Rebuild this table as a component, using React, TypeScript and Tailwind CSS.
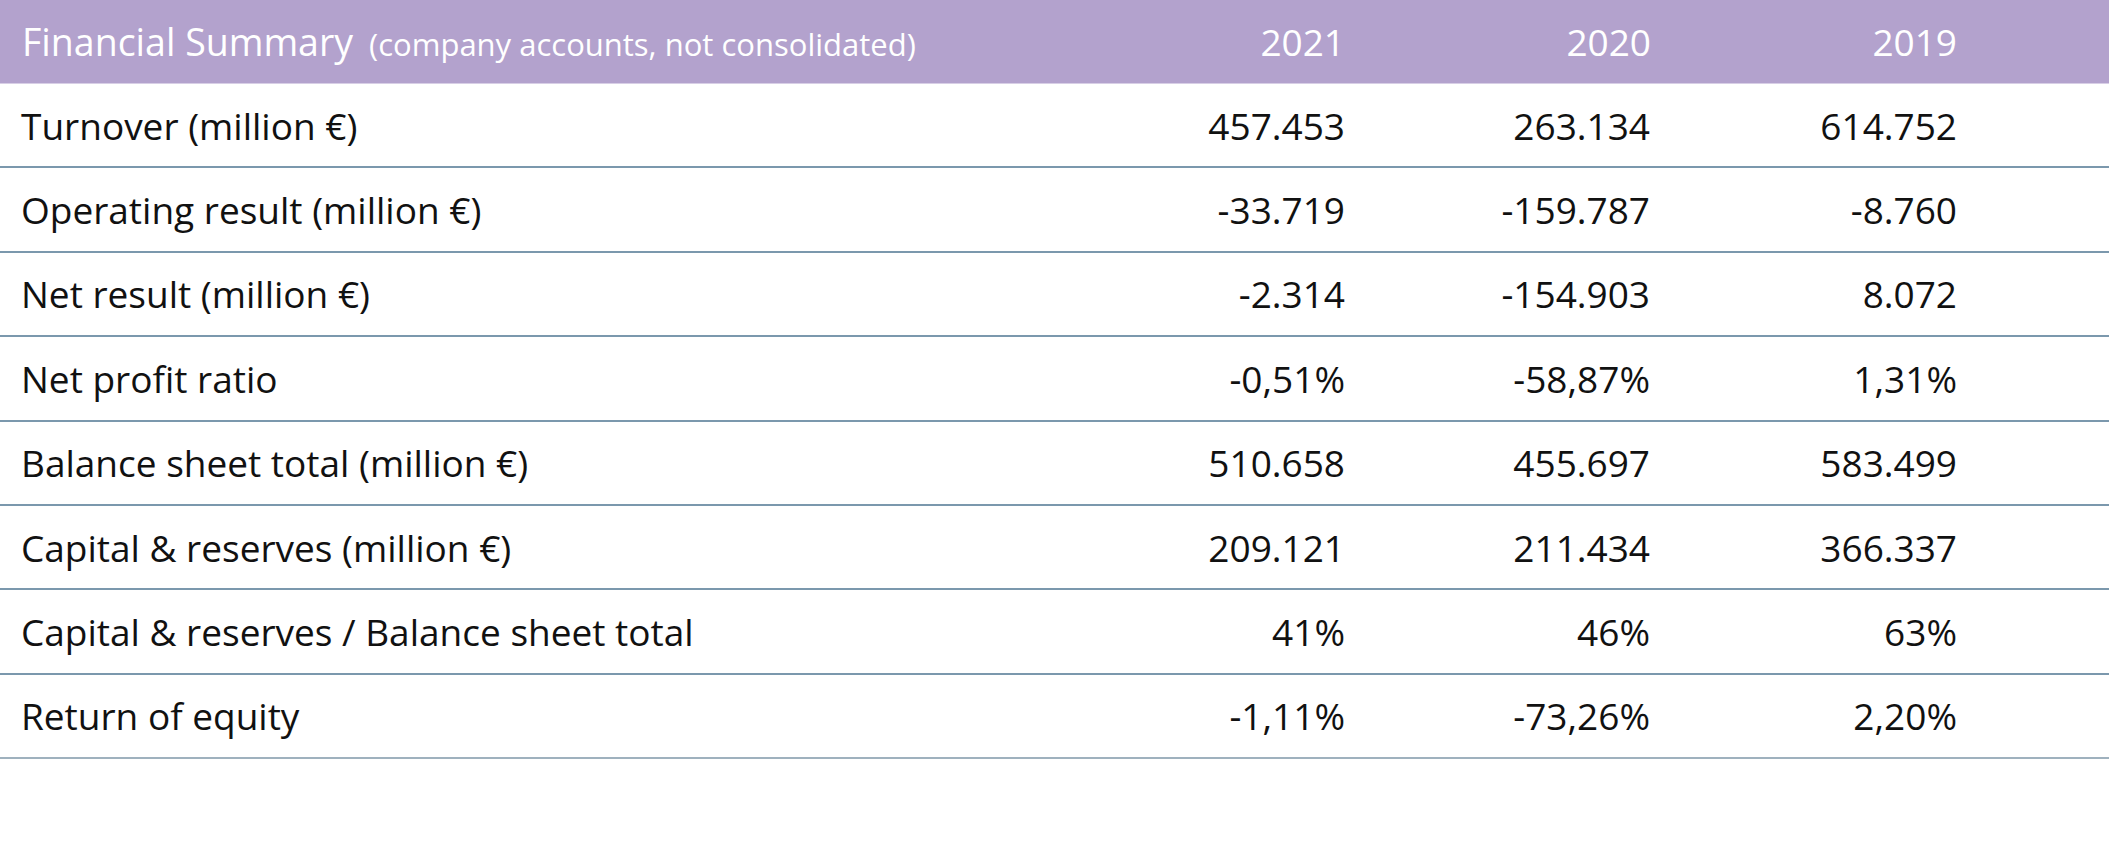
import React from "react";

const rows: [string, string, string, string][] = [
  ["Turnover (million €)", "457.453", "263.134", "614.752"],
  ["Operating result (million €)", "-33.719", "-159.787", "-8.760"],
  ["Net result (million €)", "-2.314", "-154.903", "8.072"],
  ["Net profit ratio", "-0,51%", "-58,87%", "1,31%"],
  ["Balance sheet total (million €)", "510.658", "455.697", "583.499"],
  ["Capital & reserves (million €)", "209.121", "211.434", "366.337"],
  ["Capital & reserves / Balance sheet total", "41%", "46%", "63%"],
  ["Return of equity", "-1,11%", "-73,26%", "2,20%"],
];

export default function App() {
  return (
    <div
      className="w-[2109px] h-[844px] bg-white"
      style={{ fontFamily: '"Open Sans", "Noto Sans", sans-serif' }}
    >
      <div className="grid grid-cols-[1180px_311px_309px_309px] h-[84px] bg-[#b3a2cd] border-b border-[#d8cfe6] text-white">
        <div className="flex items-center pl-[22px]">
          <span className="text-[37.5px] leading-none">Financial Summary</span>
          <span className="text-[31px] leading-none ml-[16px] mt-[6px]">
            (company accounts, not consolidated)
          </span>
        </div>
        <div className="flex items-center justify-end pr-[146px] text-[37px] leading-none">2021</div>
        <div className="flex items-center justify-end pr-[149px] text-[37px] leading-none">2020</div>
        <div className="flex items-center justify-end pr-[152px] text-[37px] leading-none">2019</div>
      </div>
      {rows.map((r, i) => (
        <div
          key={i}
          className={
            i === rows.length - 1
              ? "grid grid-cols-[1180px_311px_309px_309px] h-[84.4px] border-b-2 border-[#9fb1be] text-[#111111]"
              : "grid grid-cols-[1180px_311px_309px_309px] h-[84.4px] border-b-2 border-[#7b98ad] text-[#111111]"
          }
        >
          <div className="flex items-center pl-[21px] text-[37px] leading-none">{r[0]}</div>
          <div className="flex items-center justify-end pr-[146px] text-[37px] leading-none">{r[1]}</div>
          <div className="flex items-center justify-end pr-[150px] text-[37px] leading-none">{r[2]}</div>
          <div className="flex items-center justify-end pr-[152px] text-[37px] leading-none">{r[3]}</div>
        </div>
      ))}
    </div>
  );
}
